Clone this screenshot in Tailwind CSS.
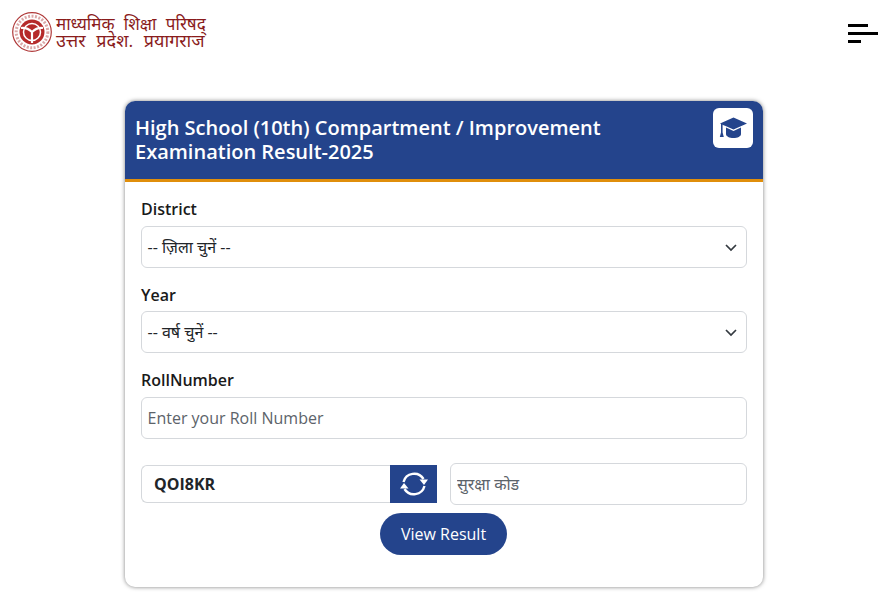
<!DOCTYPE html>
<html lang="en">
<head>
  <meta charset="UTF-8" />
  <meta name="viewport" content="width=device-width, initial-scale=1.0"/>
  <title>High School Result</title>
  <script src="https://cdn.jsdelivr.net/npm/@tailwindcss/browser@4"></script>
</head>
<body class="bg-white h-[608px] overflow-hidden font-['Open_Sans','Noto_Sans','Noto_Sans_Devanagari',sans-serif] text-[#212529]">
  <header class="h-[101px] flex justify-between items-start pl-3 pr-[18px] pt-3">
    <div class="flex items-center gap-1">
      <svg width="40" height="40" viewBox="0 0 40 40" fill="none">
        <circle cx="20" cy="20" r="19.300" stroke="#b03a3a" stroke-width="1.200"/>
        <circle cx="20" cy="20" r="15.800" stroke="#dba8a8" stroke-width="3" stroke-dasharray="2 1.500"/>
        <circle cx="20" cy="20" r="12.500" fill="#b52a2a"/>
        <circle cx="20" cy="20" r="8.500" fill="none" stroke="#fff" stroke-width="1.500"/>
        <path d="M20 20V31M20 20C17 17 13 15.500 9 16M20 20C23 17 27 15.500 31 16" stroke="#fff" stroke-width="2.200"/>
      </svg>
      <div class="text-[#8a1c1c] text-[17px] leading-[17px] [word-spacing:5px] whitespace-nowrap">
        <div>माध्यमिक शिक्षा परिषद्</div>
        <div class="text-[18px] [word-spacing:6px]">उत्तर प्रदेश. प्रयागराज</div>
      </div>
    </div>
    <button class="mt-3 flex flex-col gap-[5px] w-[30px]">
      <span class="block h-[3px] w-5 bg-black"></span>
      <span class="block h-[3px] w-[30px] bg-black"></span>
      <span class="block h-[3px] w-[13px] bg-black"></span>
    </button>
  </header>

  <main class="w-[638px] h-[486px] ml-[125px] bg-white rounded-[10px] shadow-[0_0_4px_rgba(0,0,0,0.5)] overflow-hidden">
    <div class="h-[81px] bg-[#24448c] border-b-[3px] border-[#e08e0b] flex justify-between pl-2.5 pr-2.5 pt-[7px]">
      <h1 class="w-[520px] text-white text-[20px] leading-6 font-semibold pt-2">High School (10th) Compartment / Improvement Examination Result-2025</h1>
      <div class="w-10 h-10 bg-white rounded-md flex items-center justify-center">
        <svg width="28" height="22" viewBox="0 0 28 22" fill="#24448c">
          <path d="M14.500 .5 28 6.500 14.500 12.500 6 8.700 4 8 1 6.500z"/>
          <path d="M7 10.500 14.500 14 22 10.500V17c0 2.500-3.500 4-7.500 4S7 19.500 7 17z"/>
          <path d="M2 7h1.600v8.500l1.200 4.500H.8L2 15.500z"/>
        </svg>
      </div>
    </div>
    <form class="px-4 pt-[15px]">
      <label class="block text-[16px] leading-6 font-semibold text-[#1a1a1a] mb-[5px]">District</label>
      <div class="relative h-[42px] border border-[#d5d8dc] rounded-md flex items-center pl-[5.5px] text-[16px] text-[#212529]">
        -- ज़िला चुनें --
        <svg class="absolute right-[9px] top-[16px]" width="12" height="9" viewBox="0 0 12 9" fill="none"><path d="M1 2l5 5 5-5" stroke="#343a40" stroke-width="1.700"/></svg>
      </div>
      <label class="block text-[16px] leading-6 font-semibold text-[#1a1a1a] mt-[15px] mb-[4px]">Year</label>
      <div class="relative h-[42px] border border-[#d5d8dc] rounded-md flex items-center pl-[5.5px] text-[16px] text-[#212529]">
        -- वर्ष चुनें --
        <svg class="absolute right-[9px] top-[16px]" width="12" height="9" viewBox="0 0 12 9" fill="none"><path d="M1 2l5 5 5-5" stroke="#343a40" stroke-width="1.700"/></svg>
      </div>
      <label class="block text-[16px] leading-6 font-semibold text-[#1a1a1a] mt-[15px] mb-[5px]">RollNumber</label>
      <input class="block w-full h-[42px] border border-[#d5d8dc] rounded-md pl-[5.5px] text-[16px] placeholder:text-[#5c636a]" placeholder="Enter your Roll Number" />
      <div class="flex gap-[13px] mt-6 items-center">
        <div class="flex w-[296px] h-[38px]">
          <div class="flex-1 border border-[#d5d8dc] border-r-0 rounded-l-md flex items-center pl-3 font-bold text-[16px] text-[#212529]">QOI8KR</div>
          <div class="w-[47px] bg-[#24448c] flex items-center justify-center">
            <svg width="30" height="28" viewBox="0 0 30 28" fill="none" stroke="#fff" stroke-width="2.400">
              <path d="M4.500 12A11 11 0 0 1 24.500 9"/>
              <path d="M25.500 16A11 11 0 0 1 5.500 19"/>
              <path d="M29 9.500H20.500L25 15z" fill="#fff" stroke="none"/>
              <path d="M1 18.500H9.500L5 13z" fill="#fff" stroke="none"/>
            </svg>
          </div>
        </div>
        <input class="flex-1 min-w-0 h-[42px] border border-[#d5d8dc] rounded-md pl-1.5 text-[16px] placeholder:text-[#5c636a]" placeholder="सुरक्षा कोड" />
      </div>
      <div class="flex justify-center mt-2 pr-px">
        <button type="button" class="w-[127px] h-[42px] rounded-full bg-[#24448c] text-white text-[16px]">View Result</button>
      </div>
    </form>
  </main>
</body>
</html>
